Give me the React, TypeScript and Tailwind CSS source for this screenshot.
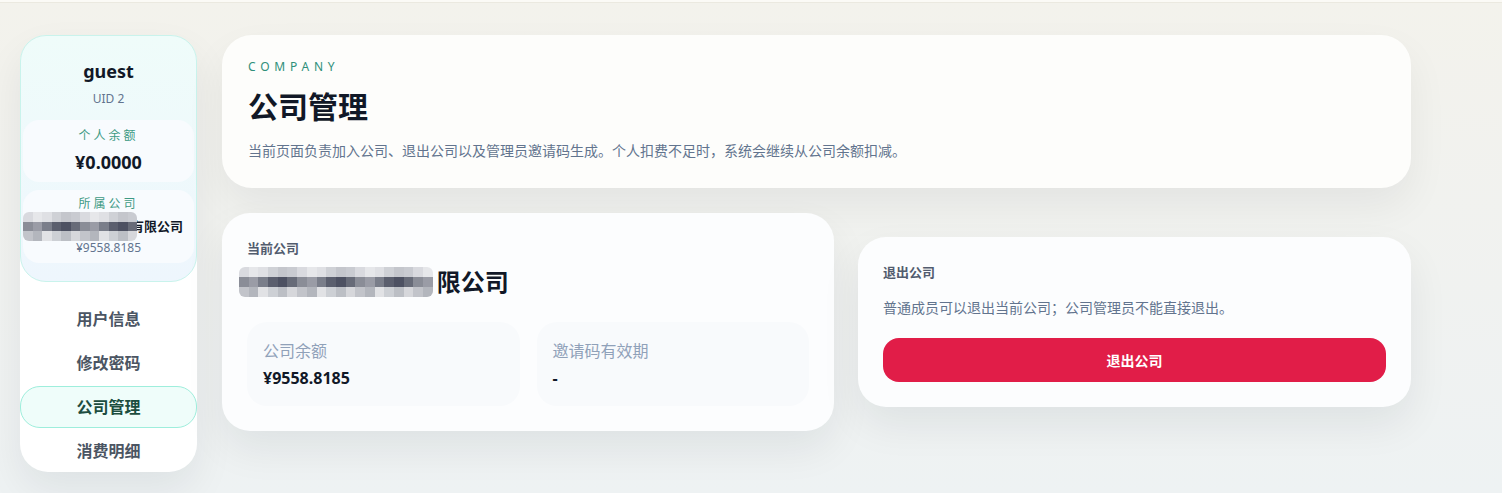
import React from 'react';

const navItems = ['用户信息', '修改密码', '公司管理', '消费明细'];

// pixelated cover for the hidden part of the company name
const Mosaic: React.FC<{ cols: number; size: number }> = ({ cols, size }) => {
  const tones = [
    ['#d9dadf', '#c9cbd1', '#e6e7ea', '#cfd1d6', '#dfe0e4', '#c4c6cc'],
    ['#5b5f6e', '#7a7e8a', '#4d5162', '#8a8d97', '#676b78', '#9a9ca6'],
    ['#c2c4ca', '#d6d7db', '#b3b6bd', '#cdd0d5', '#e1e2e5', '#bcbfc5'],
  ];
  return (
    <div className="flex flex-col overflow-hidden rounded-md">
      {tones.map((row, r) => (
        <div key={r} className="flex">
          {Array.from({ length: cols }).map((_, c) => (
            <div
              key={c}
              style={{ width: size, height: size, backgroundColor: row[(c * 7 + r * 3 + (c % 3)) % row.length] }}
            />
          ))}
        </div>
      ))}
    </div>
  );
};

const Sidebar: React.FC = () => (
  <aside className="w-[177px] shrink-0 rounded-[28px] bg-white shadow-[0_18px_40px_rgba(15,23,42,0.07)]">
    <div className="rounded-[26px] border border-[#c9f3ec] bg-gradient-to-b from-[#effcfa] to-[#eef6fd] px-[2px] pb-[18px] pt-[22px] text-center">
      <div className="text-[18px] font-bold leading-[26px] text-[#111827]">guest</div>
      <div className="mt-[2px] text-[12px] leading-[26px] text-slate-500">UID 2</div>
      <div className="mt-[8px] rounded-[16px] bg-[#f8fbfe] pb-[6px] pt-[8px]">
        <div className="text-[12px] leading-[16px] tracking-[0.25em] text-[#3d9a84]">个人余额</div>
        <div className="mt-[4px] text-[18px] font-bold leading-[28px] text-[#111827]">¥0.0000</div>
      </div>
      <div className="mt-[8px] rounded-[16px] bg-[#f8fbfe] pb-[8px] pt-[6px]">
        <div className="text-[12px] leading-[16px] tracking-[0.25em] text-[#3d9a84]">所属公司</div>
        <div className="flex items-center text-[13px] font-bold leading-[28px] text-[#111827]">
          <div className="relative z-10 -mr-[6px]">
            <Mosaic cols={12} size={9.5} />
          </div>
          <span>有限公司</span>
        </div>
        <div className="text-[12px] leading-[14px] text-slate-500">¥9558.8185</div>
      </div>
    </div>
    <nav className="mt-[16px] flex flex-col gap-[2px]">
      {navItems.map((item) => (
        <div
          key={item}
          className={
            item === '公司管理'
              ? 'flex h-[42px] items-center justify-center rounded-[20px] border border-[#9eeedc] bg-[#effdfa] text-[16px] font-bold text-[#1d4d3f]'
              : 'flex h-[42px] items-center justify-center text-[16px] font-bold text-[#4b5563]'
          }
        >
          {item}
        </div>
      ))}
    </nav>
  </aside>
);

export default function App() {
  return (
    <div className="min-h-[493px] bg-gradient-to-b from-[#f3f2ec] to-[#eef2f3] font-['Noto_Sans','Noto_Sans_CJK_SC',sans-serif]">
      <div className="h-[3px] border-b border-[#ebe9e0] bg-[#fbfaf6]" />
      <div className="flex gap-[25px] pl-[20px] pt-[32px]">
        <Sidebar />
        <main className="flex w-[1189px] flex-col gap-[25px]">
          <section className="rounded-[30px] bg-[#fdfdfb] px-[26px] pb-[27px] pt-[23px] shadow-[0_18px_40px_rgba(15,23,42,0.06)]">
            <div className="text-[12px] leading-[17px] tracking-[0.4em] text-[#2f8f7a]">COMPANY</div>
            <h1 className="mt-[12px] text-[30px] font-bold leading-[40px] text-[#111827]">公司管理</h1>
            <p className="mt-[14px] text-[14px] leading-[20px] text-slate-500">
              当前页面负责加入公司、退出公司以及管理员邀请码生成。个人扣费不足时，系统会继续从公司余额扣减。
            </p>
          </section>

          <div className="grid grid-cols-[1.107fr_1fr] items-center gap-[24px]">
            <section className="rounded-[28px] bg-[#fcfdfe] px-[25px] pb-[25px] pt-[26px] shadow-[0_18px_40px_rgba(15,23,42,0.07)]">
              <div className="text-[13px] font-bold leading-[18px] text-[#525c6e]">当前公司</div>
              <div className="mt-[9px] flex items-center text-[24px] font-bold leading-[32px] text-[#111827]">
                <div className="-ml-[8px]">
                  <Mosaic cols={20} size={9.7} />
                </div>
                <span className="ml-[4px]">限公司</span>
              </div>
              <div className="mt-[24px] grid grid-cols-2 gap-[17px]">
                <div className="rounded-[20px] bg-[#f8fafc] px-[16px] pb-[17px] pt-[18px]">
                  <div className="text-[16px] leading-[22px] text-slate-400">公司余额</div>
                  <div className="mt-[5px] text-[16px] font-bold leading-[22px] text-[#111827]">¥9558.8185</div>
                </div>
                <div className="rounded-[20px] bg-[#f8fafc] px-[16px] pb-[17px] pt-[18px]">
                  <div className="text-[16px] leading-[22px] text-slate-400">邀请码有效期</div>
                  <div className="mt-[5px] text-[16px] font-bold leading-[22px] text-[#111827]">-</div>
                </div>
              </div>
            </section>

            <section className="rounded-[28px] bg-[#fcfdfe] px-[25px] pb-[25px] pt-[26px] shadow-[0_18px_40px_rgba(15,23,42,0.07)]">
              <div className="text-[13px] font-bold leading-[18px] text-[#525c6e]">退出公司</div>
              <p className="mt-[17px] text-[14px] leading-[20px] text-slate-500">普通成员可以退出当前公司；公司管理员不能直接退出。</p>
              <button className="mt-[20px] h-[44px] w-full rounded-[16px] bg-[#e11d48] text-[14px] font-bold text-white">
                退出公司
              </button>
            </section>
          </div>
        </main>
      </div>
    </div>
  );
}
